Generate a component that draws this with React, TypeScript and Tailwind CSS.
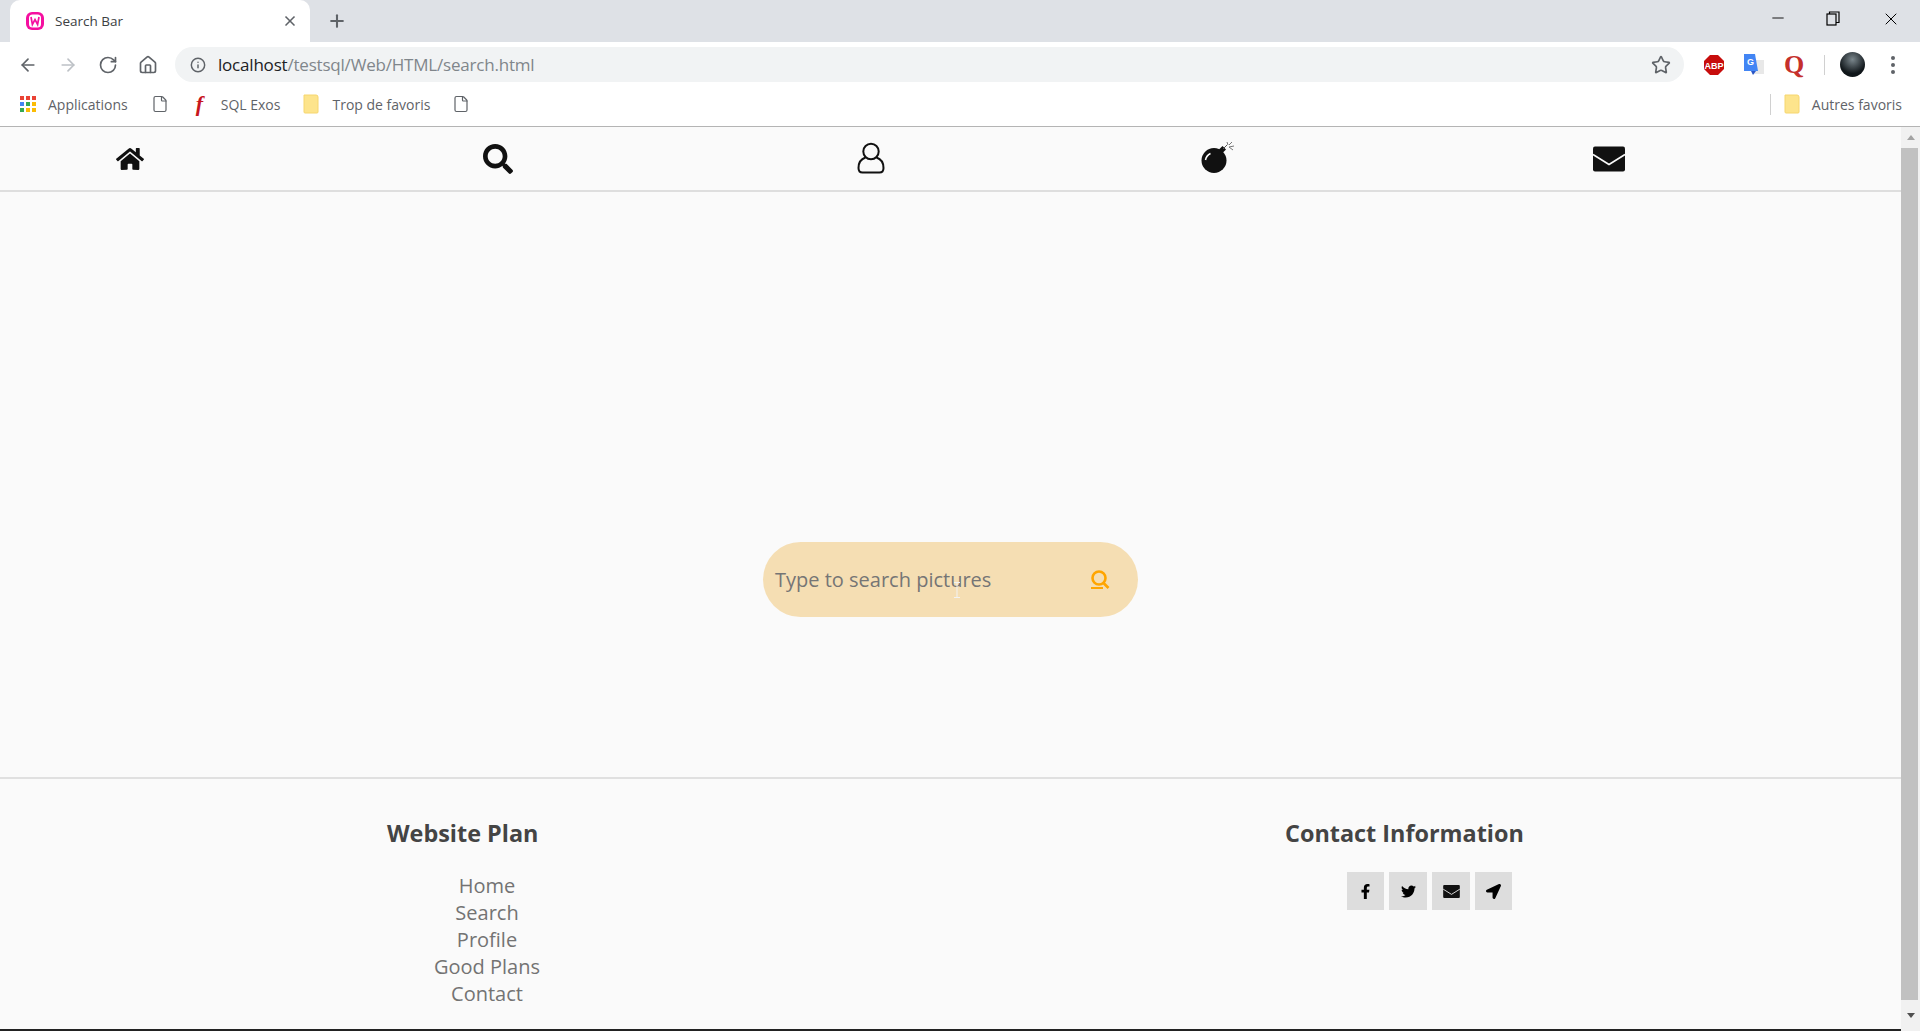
import React from "react";
import { FaHome, FaSearch, FaFacebookF, FaTwitter, FaLocationArrow } from "react-icons/fa";
import { ArrowLeft, ArrowRight, RotateCw, Home, Info, Star, Plus, X, Minus, File } from "lucide-react";

const chrome = { fontFamily: '"Open Sans", sans-serif' };

function Folder() {
  return (
    <svg width="16" height="20" viewBox="0 0 16 20" className="shrink-0">
      <path d="M1 1h12a2 2 0 0 1 2 2v15a1 1 0 0 1-1 1H2a1 1 0 0 1-1-1z" fill="#fde48c" stroke="#f6d66e" />
    </svg>
  );
}

function AppsGrid() {
  const colors = ["#ea4335", "#ea4335", "#ea4335", "#4285f4", "#34a853", "#fbbc05", "#34a853", "#fbbc05", "#fbbc05"];
  return (
    <div className="grid grid-cols-3 gap-[2px] w-[16px] shrink-0">
      {colors.map((c, i) => (
        <span key={i} className="w-[4px] h-[4px]" style={{ backgroundColor: c }} />
      ))}
    </div>
  );
}

function Favicon() {
  return (
    <svg width="20" height="20" viewBox="0 0 20 20" className="shrink-0">
      <rect x="1" y="1" width="18" height="18" rx="6" fill="#f50fa0" />
      <rect x="4" y="3.500" width="12" height="13" rx="3.500" fill="#fff" />
      <path d="M6 6l1.400 7.500L10 8.500l2.600 5L14 6" fill="none" stroke="#f50fa0" strokeWidth="1.700" />
    </svg>
  );
}

function Bomb() {
  return (
    <svg width="33" height="33" viewBox="0 0 33 33">
      <circle cx="13" cy="18.500" r="12.500" fill="#111" />
      <rect x="19" y="5" width="5" height="5" transform="rotate(45 21.500 7.500)" fill="#111" />
      <path d="M22 7l4-4" stroke="#555" strokeWidth="1" />
      <path d="M26 0l1 3M31 0l-3 3M33 4l-5 1M32 8l-4-3" stroke="#777" strokeWidth="1" />
      <path d="M4.500 18a9 9 0 0 1 5-6.500" stroke="#fff" strokeWidth="1.500" fill="none" />
    </svg>
  );
}

function User() {
  return (
    <svg width="28" height="32" viewBox="0 0 28 32" fill="none" stroke="#111" strokeWidth="2">
      <circle cx="14" cy="9.500" r="7.700" />
      <path d="M8.500 15.500C4 17 1.500 21 1.500 26c0 3 1.500 4.500 4 4.500h17c2.500 0 4-1.500 4-4.500 0-5-2.500-9-7-10.500" />
    </svg>
  );
}

function Mail({ w, h }: { w: number; h: number }) {
  return (
    <svg width={w} height={h} viewBox="0 0 32 25">
      <rect x="0" y="0" width="32" height="25" rx="2" fill="#111" />
      <path d="M0 8l16 10L32 8" fill="none" stroke="#fafafa" strokeWidth="1.600" />
    </svg>
  );
}

function SearchOrange() {
  return (
    <svg width="20" height="20" viewBox="0 0 20 20" fill="none" stroke="#ffa500" strokeWidth="2.600">
      <circle cx="9" cy="8" r="6.500" />
      <path d="M13.500 13l5 5" />
      <path d="M1 18h12" strokeWidth="2" />
    </svg>
  );
}

function Social({ w, children }: { w: string; children: React.ReactNode }) {
  return <div className={`${w} h-[38px] bg-[#dddddd] flex items-center justify-center text-[15px] text-black`}>{children}</div>;
}

export default function App() {
  return (
    <div className="h-screen w-full overflow-hidden flex flex-col bg-white" style={chrome}>
      {/* Tab strip */}
      <div className="h-[42px] shrink-0 bg-[#dee1e6] flex items-end">
        <div className="ml-[10px] w-[300px] h-[42px] bg-white rounded-t-[10px] flex items-center pl-[15px] pr-[12px]">
          <Favicon />
          <span className="ml-[10px] text-[13.500px] text-[#3c4043] flex-1">Search Bar</span>
          <X size={16} strokeWidth={2.500} className="text-[#5f6368]" />
        </div>
        <div className="h-[42px] flex items-center ml-[17px]">
          <Plus size={20} strokeWidth={2.500} className="text-[#5f6368]" />
        </div>
        <div className="flex-1" />
        <div className="h-[42px] flex items-start pt-[9px] text-black">
          <Minus size={18} strokeWidth={1.200} className="mr-[39px]" />
          <svg width="14" height="15" viewBox="0 0 14 15" fill="none" stroke="#000" strokeWidth="1.200" className="mt-[2px] mr-[41px]">
            <rect x="1" y="3" width="9" height="11" />
            <path d="M3.500 3V1h9.500v10.500h-3" />
          </svg>
          <X size={20} strokeWidth={1.200} className="mr-[19px]" />
        </div>
      </div>

      {/* Toolbar */}
      <div className="h-[42px] shrink-0 bg-white flex items-center pt-[3px]">
        <div className="w-[175px] flex items-center pl-[18px] gap-[20px] text-[#5f6368]">
          <ArrowLeft size={20} strokeWidth={2} />
          <ArrowRight size={20} strokeWidth={2} className="text-[#bdc1c6]" />
          <RotateCw size={20} strokeWidth={2} />
          <Home size={20} strokeWidth={2} />
        </div>
        <div className="w-[1509px] h-[35px] bg-[#f1f3f4] rounded-full flex items-center pl-[15px] pr-[13px]">
          <Info size={16} strokeWidth={2.200} className="text-[#5f6368]" />
          <span className="ml-[12px] text-[17px] tracking-[-0.2px] flex-1 text-[#80868b]">
            <span className="text-[#202124]">localhost</span>/testsql/Web/HTML/search.html
          </span>
          <Star size={20} strokeWidth={2} className="text-[#5f6368]" />
        </div>
        <div className="flex-1 flex items-center pl-[20px]">
          <svg width="20" height="20" viewBox="0 0 20 20" className="shrink-0">
            <path d="M6 0h8l6 6v8l-6 6H6l-6-6V6z" fill="#c70d0c" />
            <text x="10" y="13.500" textAnchor="middle" fontSize="9" fontWeight="700" fill="#fff" fontFamily="Liberation Sans">ABP</text>
          </svg>
          <svg width="20" height="22" viewBox="0 0 20 22" className="ml-[20px] shrink-0">
            <rect x="8" y="6" width="12" height="14" fill="#e8e8e8" />
            <path d="M0 0h11l3 17H0z" fill="#4285f4" />
            <path d="M7 17h5l-3 4z" fill="#2a56c6" />
            <text x="6.500" y="11" textAnchor="middle" fontSize="9" fontWeight="700" fill="#fff" fontFamily="Liberation Sans">G</text>
          </svg>
          <span className="ml-[20px] w-[20px] text-[26px] leading-none font-bold text-[#c5302c]" style={{ fontFamily: '"Liberation Serif", serif' }}>Q</span>
          <div className="ml-[20px] w-px h-[20px] bg-[#d0d0d0]" />
          <div className="ml-[15px] w-[25px] h-[25px] rounded-full shrink-0 bg-[radial-gradient(circle_at_50%_30%,#7a868c,#10161a_65%)]" />
          <div className="ml-[26px] flex flex-col gap-[3px]">
            <span className="w-[4px] h-[4px] rounded-full bg-[#5f6368]" />
            <span className="w-[4px] h-[4px] rounded-full bg-[#5f6368]" />
            <span className="w-[4px] h-[4px] rounded-full bg-[#5f6368]" />
          </div>
        </div>
      </div>

      {/* Bookmarks */}
      <div className="h-[43px] shrink-0 bg-white border-b border-[#b4b4b4] flex items-center pb-[2px] text-[14px] text-[#5f6368]">
        <div className="ml-[20px] flex items-center">
          <AppsGrid />
          <span className="ml-[12px]">Applications</span>
        </div>
        <File size={18} strokeWidth={1.600} className="ml-[23px]" />
        <span className="ml-[27px] w-[14px] text-[22px] leading-none italic font-bold text-[#c8161d]" style={{ fontFamily: '"Liberation Serif", serif' }}>f</span>
        <span className="ml-[11px]">SQL Exos</span>
        <div className="ml-[23px]"><Folder /></div>
        <span className="ml-[13px]">Trop de favoris</span>
        <File size={18} strokeWidth={1.600} className="ml-[22px]" />
        <div className="flex-1" />
        <div className="w-px h-[21px] bg-[#d0d0d0]" />
        <div className="ml-[13px]"><Folder /></div>
        <span className="ml-[12px] mr-[18px]">Autres favoris</span>
      </div>

      {/* Viewport */}
      <div className="flex-1 min-h-0 flex bg-[#fafafa]">
        <div className="flex-1 min-w-0 flex flex-col">
          <nav className="h-[65px] shrink-0 border-b-2 border-[#dedede] grid grid-cols-[260px_475px_272px_420px_364px] items-center text-[#111]">
            <div className="flex justify-center text-[28px]"><FaHome /></div>
            <div className="flex justify-center text-[30px]"><FaSearch /></div>
            <div className="flex justify-center -mt-[2px]"><User /></div>
            <div className="flex justify-center"><Bomb /></div>
            <div className="flex justify-center"><Mail w={32} h={26} /></div>
          </nav>

          <main className="flex-1 flex items-start justify-center pt-[350px]">
            <div className="relative w-[375px] h-[75px] rounded-full bg-[#f5deb3] flex items-center pl-[12px] pr-[28px]">
              <span className="flex-1 text-[20px] text-[#757575]">Type to search pictures</span>
              <SearchOrange />
              <svg width="8" height="16" viewBox="0 0 8 16" className="absolute left-[190px] top-[40px]" fill="none" stroke="#f2f2f2" strokeWidth="1">
                <path d="M1 .500h6M4 .500v15M1 15.500h6" />
              </svg>
            </div>
          </main>

          <footer className="h-[252px] shrink-0 border-t-2 border-[#e0e0e0] flex pl-[387px] pt-[38px]">
            <div className="w-[898px]">
              <h2 className="text-[23.400px] leading-[33px] font-bold text-[#444444]">Website Plan</h2>
              <ul className="mt-[22px] w-[200px] text-center text-[20px] leading-[27px] text-[#737373]">
                <li>Home</li>
                <li>Search</li>
                <li>Profile</li>
                <li>Good Plans</li>
                <li>Contact</li>
              </ul>
            </div>
            <div>
              <h2 className="text-[23.400px] leading-[33px] font-bold text-[#444444]">Contact Information</h2>
              <div className="mt-[22px] ml-[62px] flex gap-[5px]">
                <Social w="w-[37px]"><FaFacebookF /></Social>
                <Social w="w-[38px]"><FaTwitter /></Social>
                <Social w="w-[38px]"><Mail w={17} h={13} /></Social>
                <Social w="w-[37px]"><FaLocationArrow /></Social>
              </div>
            </div>
          </footer>
          <div className="h-[2px] shrink-0 bg-[#222222]" />
        </div>

        {/* Scrollbar */}
        <div className="w-[19px] shrink-0 bg-[#f1f1f1] flex flex-col items-center">
          <div className="h-[21px] shrink-0 flex items-center justify-center">
            <span className="w-0 h-0 border-x-[4px] border-x-transparent border-b-[5px] border-b-[#a3a3a3]" />
          </div>
          <div className="flex-1 w-[17px] mr-[2px] bg-[#c1c1c1]" />
          <div className="h-[31px] shrink-0 flex items-center justify-center">
            <span className="w-0 h-0 border-x-[4px] border-x-transparent border-t-[5px] border-t-[#505050]" />
          </div>
        </div>
      </div>
    </div>
  );
}
